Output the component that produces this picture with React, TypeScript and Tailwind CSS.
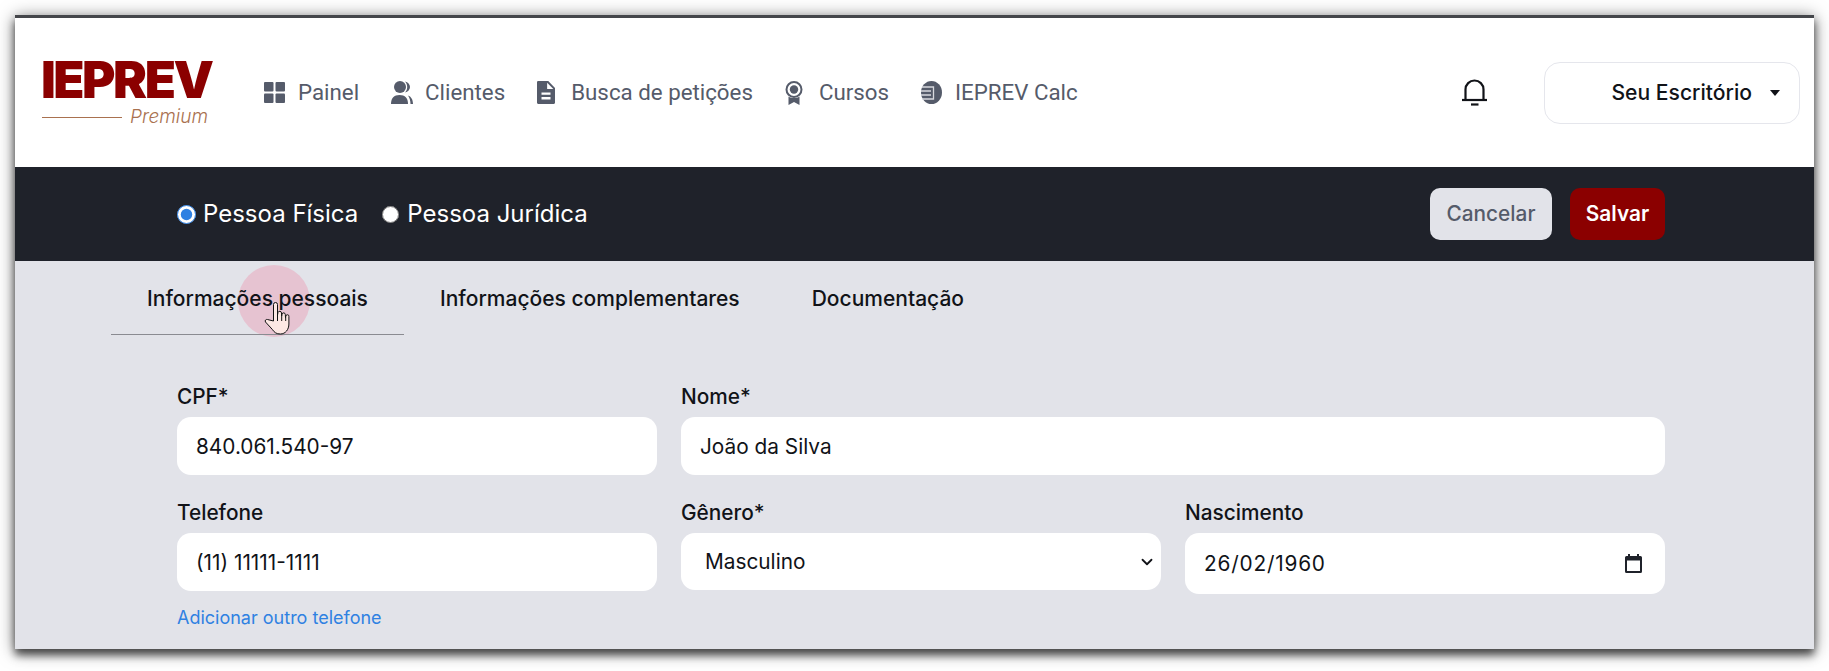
import { ChevronDown } from "lucide-react";

const NavItem = ({ icon, label }: { icon: React.ReactNode; label: string }) => (
  <a className="flex items-center text-[#555b6a]">
    <span className="flex w-[34px] shrink-0 items-center">{icon}</span>
    <span>{label}</span>
  </a>
);

const PainelIcon = () => (
  <svg width="21" height="21" viewBox="0 0 21 21" fill="#555b6a">
    <rect x="0" y="0" width="9.5" height="9.5" rx="1" />
    <rect x="11.5" y="0" width="9.5" height="9.5" rx="1" />
    <rect x="0" y="11.5" width="9.5" height="9.5" rx="1" />
    <rect x="11.5" y="11.5" width="9.5" height="9.5" rx="1" />
  </svg>
);

const ClientesIcon = () => (
  <svg width="22" height="23" viewBox="0 0 22 23" fill="#555b6a">
    <circle cx="9" cy="6" r="6" />
    <path d="M0 23c0-6 3-9 8.500-9s8.500 3 8.500 9z" />
    <path d="M14 .5c3 .6 5 3 5 5.500s-2 5-5 5.500c1.500-1.500 2.200-3.500 2.200-5.500S15.500 2 14 .5z" />
    <path d="M17 14.500c3 1 5 4 5 8.500h-2.500c0-3.500-1-6.300-2.500-8.500z" />
  </svg>
);

const DocIcon = () => (
  <svg width="18" height="23" viewBox="4 2 16 20" fill="#555b6a" preserveAspectRatio="none">
    <path d="M14 2H5a1 1 0 0 0-1 1v18a1 1 0 0 0 1 1h14a1 1 0 0 0 1-1V8l-6-6zm2 16H8v-2h8v2zm0-4H8v-2h8v2zm-3-5V3.500L18.500 9H13z" />
  </svg>
);

const CursosIcon = () => (
  <svg width="18" height="24" viewBox="0 0 18 24" fill="#555b6a">
    <path fillRule="evenodd" d="M9 0a8.500 8.500 0 1 1 0 17A8.500 8.500 0 0 1 9 0zm0 2a6.500 6.500 0 1 0 0 13A6.500 6.500 0 0 0 9 2z" />
    <circle cx="9" cy="8.500" r="4.200" />
    <path d="M3.500 15.500l0 8.500 5.500-3 5.500 3 0-8.500c-3 2-8 2-11 0z" />
  </svg>
);

const CalcIcon = () => (
  <svg width="21" height="23" viewBox="0 0 21 23">
    <ellipse cx="10.500" cy="11.500" rx="10.500" ry="11.500" fill="#555b6a" />
    <g stroke="#d8d9de" strokeWidth="1.300" fill="none">
      <path d="M1 6h11.500v12H1" />
      <path d="M0 10h10M0 14h10" />
    </g>
  </svg>
);

const BellIcon = () => (
  <svg width="25" height="27" viewBox="0 0 25 27" fill="none" stroke="#111318" strokeWidth="2.200">
    <path d="M3.500 21V10.500a9 9 0 0 1 18 0V21" />
    <path d="M0 21h25" />
    <path d="M9 25.500h7.500" />
  </svg>
);

const CalendarIcon = () => (
  <svg width="17" height="19" viewBox="0 0 17 19" fill="#1f222a">
    <path fillRule="evenodd" d="M3 0h2v2h7V0h2v2h1.500A1.500 1.500 0 0 1 17 3.500v14a1.500 1.500 0 0 1-1.500 1.500h-14A1.500 1.500 0 0 1 0 17.500v-14A1.500 1.500 0 0 1 1.500 2H3zM2 6.500V17h13V6.500z" />
  </svg>
);

const HandCursor = () => (
  <svg width="28" height="34" viewBox="0 0 28 34" stroke="#111" strokeWidth="1" fill="#fde8e4" strokeLinejoin="round">
    <path d="M9.500 20V3.500a2 2 0 0 1 4 0V14l.5-2.500a1.800 1.800 0 0 1 3.500.5l.2 3 .3-2a1.700 1.700 0 0 1 3.300.5l.2 3 .4-1.500a1.500 1.500 0 0 1 3 .5V23c0 5.500-3.500 10-8.500 10-4 0-6-1.500-8-4.500L1.500 21c-1-1.500.5-3 2-2.500z" />
    <path d="M13.500 14v6M17.700 15v5M21.700 16v4" fill="none" />
  </svg>
);

const Field = ({ label, value, className }: { label: string; value: string; className?: string }) => (
  <label className={`block ${className ?? ""}`}>
    <span className="mb-[7px] block text-[20.8px] leading-[27px] font-medium text-[#111318]">{label}</span>
    <input
      readOnly
      value={value}
      className="h-[58px] w-full rounded-[14px] bg-white px-[19px] text-[20.8px] text-[#111318] outline-none"
    />
  </label>
);

export default function App() {
  return (
    <div className="min-h-[671px] bg-white pt-[15px] pr-[15px] pb-[22px] pl-[15px] font-['Inter',sans-serif]">
      <div className="relative h-[634px] overflow-hidden border-t-[3px] border-[#44464a] bg-[#e2e3e9] shadow-[0_6px_8px_rgba(0,0,0,0.6),0_2px_16px_rgba(0,0,0,0.5)]">
        <header className="flex h-[149px] items-center bg-white pr-[14px] pl-[26px]">
          <div className="w-[223px] shrink-0">
            <div className="h-[39px] pt-[2px] text-[51px] leading-[37px] font-black tracking-[-2.500px] text-[#8b0000]">
              IEPREV
            </div>
            <div className="mt-[10px] ml-[1px] flex items-center gap-[8px]">
              <span className="h-px w-[80px] bg-[#a9714f]" />
              <span className="text-[19px] leading-[18px] font-light text-[#a9714f] italic">Premium</span>
            </div>
          </div>
          <nav className="flex items-center gap-[32px] font-['Roboto',sans-serif] text-[22.3px]">
            <NavItem icon={<PainelIcon />} label="Painel" />
            <NavItem icon={<ClientesIcon />} label="Clientes" />
            <NavItem icon={<DocIcon />} label="Busca de petições" />
            <NavItem icon={<CursosIcon />} label="Cursos" />
            <NavItem icon={<CalcIcon />} label="IEPREV Calc" />
          </nav>
          <div className="ml-auto">
            <BellIcon />
          </div>
          <button className="ml-[57px] flex h-[62px] w-[256px] items-center justify-end rounded-[16px] border border-[#e5e6ec] pr-[19px] text-[21.1px] font-medium text-[#111318]">
            Seu Escritório
            <span className="ml-[18px] h-0 w-0 border-x-[5.500px] border-t-[6px] border-x-transparent border-t-[#111318]" />
          </button>
        </header>

        <div className="flex h-[94px] items-center justify-between bg-[#1f222a] pr-[149px] pl-[162px]">
          <div className="flex items-center text-[24px] text-white">
            <input type="radio" name="tipo" defaultChecked className="mr-[7px] h-[19px] w-[19px] accent-[#2f81e2]" />
            <span>Pessoa Física</span>
            <input type="radio" name="tipo" className="mr-[8px] ml-[24px] h-[17px] w-[17px]" />
            <span>Pessoa Jurídica</span>
          </div>
          <div className="flex items-center gap-[18px] text-[20.8px] font-medium">
            <button className="h-[52px] w-[122px] rounded-[10px] bg-[#e2e3e9] text-[#555b6a]">Cancelar</button>
            <button className="h-[52px] w-[95px] rounded-[10px] bg-[#8b0000] font-semibold text-white">Salvar</button>
          </div>
        </div>

        <div className="absolute top-[247px] left-[223px] h-[72px] w-[72px] rounded-full bg-[#e6c3d1]" />

        <div className="relative flex pl-[96px] text-[21px] font-medium text-[#111318]">
          <div className="flex h-[74px] w-[293px] items-center justify-center border-b border-[#8a8b91] pt-[2px]">Informações pessoais</div>
          <div className="flex h-[74px] items-center px-[36px] pt-[2px]">Informações complementares</div>
          <div className="flex h-[74px] items-center px-[36px] pt-[2px]">Documentação</div>
        </div>

        <div className="grid grid-cols-3 gap-x-[24px] gap-y-[24px] pt-[48px] pr-[149px] pl-[162px]">
          <Field label="CPF*" value="840.061.540-97" />
          <Field label="Nome*" value="João da Silva" className="col-span-2" />
          <div>
            <Field label="Telefone" value="(11) 11111-1111" />
            <a className="mt-[15px] block text-[18px] leading-[24px] text-[#2f81e2]">Adicionar outro telefone</a>
          </div>
          <label className="block">
            <span className="mb-[7px] block text-[20.8px] leading-[27px] font-medium text-[#111318]">Gênero*</span>
            <div className="relative">
              <select defaultValue="m" className="h-[57px] w-full appearance-none rounded-[14px] bg-white pr-[30px] pl-[24px] text-[20.8px] text-[#111318] outline-none">
                <option value="m">Masculino</option>
                <option value="f">Feminino</option>
              </select>
              <ChevronDown size={18} strokeWidth={2.400} className="pointer-events-none absolute top-[20px] right-[5px] text-[#111318]" />
            </div>
          </label>
          <label className="block">
            <span className="mb-[7px] block text-[20.8px] leading-[27px] font-medium text-[#111318]">Nascimento</span>
            <div className="flex h-[61px] items-center justify-between rounded-[14px] bg-white pr-[23px] pl-[19px] text-[20.8px] tracking-[0.8px] text-[#111318]">
              <span>26/02/1960</span>
              <CalendarIcon />
            </div>
          </label>
        </div>

        <div className="absolute top-[283px] left-[249px]">
          <HandCursor />
        </div>
      </div>
    </div>
  );
}
